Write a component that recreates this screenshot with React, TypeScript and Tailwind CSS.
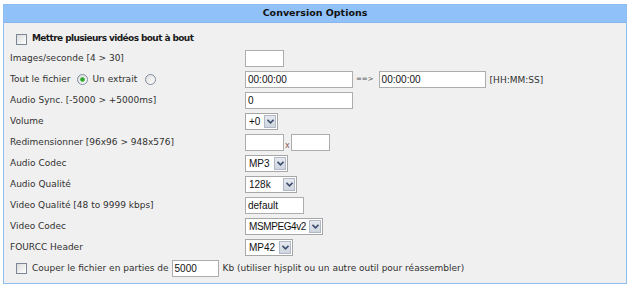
import React from "react";

const lbl = "font-['DejaVu_Sans',sans-serif] text-[9px] text-[#303030] whitespace-nowrap";
const field = "font-['Liberation_Sans',Arial,sans-serif] text-[10px] text-[#111] whitespace-nowrap";

const TextBox = ({ className = "", value = "" }: { className?: string; value?: string }) => (
  <div className={`h-[17px] border border-[#adadad] bg-white flex items-center pl-[2px] ${field} ${className}`}>
    {value}
  </div>
);

const Select = ({ className = "", value, tight = false }: { className?: string; value: string; tight?: boolean }) => (
  <div className={`h-[17px] border border-[#a7a7a7] bg-white flex items-stretch p-[1px] ${className}`}>
    <span className={`flex-1 pl-[2px] flex items-center overflow-hidden ${field} ${tight ? "tracking-[-0.4px]" : ""}`}>{value}</span>
    <span className="w-[12px] shrink-0 bg-linear-to-b from-[#e6e9ef] to-[#cfd5df] border border-[#b1b9c6] flex items-center justify-center">
      <svg width="7" height="5" viewBox="0 0 7 5">
        <path d="M0.5 0.8 L3.5 3.8 L6.5 0.8" fill="none" stroke="#3d4f6e" strokeWidth="1.6" />
      </svg>
    </span>
  </div>
);

const Checkbox = () => (
  <span className="w-[11px] h-[11px] border border-[#7b8795] bg-linear-to-br from-[#dcdcdc] to-white shrink-0" />
);

const Radio = ({ checked = false }: { checked?: boolean }) => (
  <span className="w-[11px] h-[11px] rounded-full border border-[#7f8c9c] bg-linear-to-br from-[#dedede] to-white flex items-center justify-center shrink-0">
    {checked && <span className="w-[5px] h-[5px] rounded-full bg-[#2f9e2f] border border-[#4cbf4c]" />}
  </span>
);

const Row = ({ label, children }: { label: React.ReactNode; children: React.ReactNode }) => (
  <div className="flex items-center h-[21px] pl-[6px]">
    <div className="w-[235px] flex items-center">{typeof label === "string" ? <span className={lbl}>{label}</span> : label}</div>
    <div className="flex items-center">{children}</div>
  </div>
);

export default function App() {
  return (
    <div className="w-[632px] h-[287px] bg-white pt-[4px] pl-[3px]">
      <div className="w-[624px] h-[280px] border border-[#8ebdf2] bg-[#f0f0f0] flex flex-col">
        <div className="h-[18px] bg-[#90c1f8] border-b border-[#86b6ec] flex items-center justify-center">
          <span className="font-['DejaVu_Sans',sans-serif] text-[9.5px] font-bold text-[#111]">Conversion Options</span>
        </div>

        <div className="flex flex-col pt-[7px]">
          <div className="flex items-center h-[18px] pl-[12px] gap-[5px]">
            <Checkbox />
            <span className="font-['DejaVu_Sans',sans-serif] text-[9px] font-bold tracking-[-0.6px] text-[#1a1a1a]">
              Mettre plusieurs vidéos bout à bout
            </span>
          </div>

          <Row label="Images/seconde [4 > 30]">
            <TextBox className="w-[39px]" />
          </Row>

          <Row
            label={
              <div className="flex items-center">
                <span className={lbl}>Tout le fichier</span>
                <span className="ml-[6px]"><Radio checked /></span>
                <span className={`${lbl} ml-[5px]`}>Un extrait</span>
                <span className="ml-[8px]"><Radio /></span>
              </div>
            }
          >
            <TextBox className="w-[108px]" value="00:00:00" />
            <span className="font-['DejaVu_Sans',sans-serif] text-[7px] text-[#555] ml-[3px] mr-[5px]">==&gt;</span>
            <TextBox className="w-[107px]" value="00:00:00" />
            <span className={`${lbl} text-[#444] ml-[4px] mt-[3px]`}>[HH:MM:SS]</span>
          </Row>

          <Row label="Audio Sync. [-5000 > +5000ms]">
            <TextBox className="w-[108px]" value="0" />
          </Row>

          <Row label="Volume">
            <Select className="w-[33px]" value="+0" />
          </Row>

          <Row label="Redimensionner [96x96 > 948x576]">
            <TextBox className="w-[39px]" />
            <span className="font-['DejaVu_Sans',sans-serif] text-[8px] text-[#8a5a5a] self-end leading-[8px] mb-[1px] px-[1px]">x</span>
            <TextBox className="w-[39px]" />
          </Row>

          <Row label="Audio Codec">
            <Select className="w-[43px]" value="MP3" />
          </Row>

          <Row label="Audio Qualité">
            <Select className="w-[52px]" value="128k" />
          </Row>

          <Row label="Video Qualité [48 to 9999 kbps]">
            <TextBox className="w-[59px]" value="default" />
          </Row>

          <Row label="Video Codec">
            <Select className="w-[78px]" value="MSMPEG4v2" tight />
          </Row>

          <Row label="FOURCC Header">
            <Select className="w-[48px]" value="MP42" />
          </Row>

          <div className="flex items-center h-[21px] pl-[12px]">
            <Checkbox />
            <span className={`${lbl} ml-[5px]`}>Couper le fichier en parties de</span>
            <TextBox className="w-[47px] ml-[3px]" value="5000" />
            <span className={`${lbl} ml-[4px]`}>Kb (utiliser hjsplit ou un autre outil pour réassembler)</span>
          </div>
        </div>
      </div>
    </div>
  );
}
